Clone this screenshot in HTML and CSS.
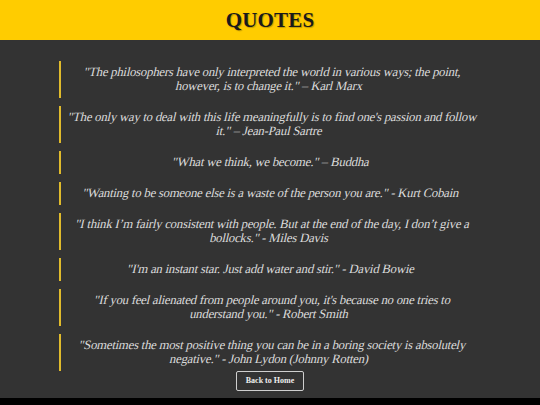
FILE: index.html
```html
<!DOCTYPE html>
<html>
<head>
<meta charset="utf-8">
<link rel="stylesheet" href="styles.css">
</head>
<body>
<header class="top">
  <h1 class="title">QUOTES</h1>
</header>
<main class="content">
  <blockquote class="quote"><div class="text">"The philosophers have only interpreted the world in various ways; the point, however, is to change it." – Karl Marx</div></blockquote>
  <blockquote class="quote"><div class="text">"The only way to deal with this life meaningfully is to find one's passion and follow it." – Jean-Paul Sartre</div></blockquote>
  <blockquote class="quote"><div class="text">"What we think, we become." – Buddha</div></blockquote>
  <blockquote class="quote"><div class="text">"Wanting to be someone else is a waste of the person you are." - Kurt Cobain</div></blockquote>
  <blockquote class="quote"><div class="text">"I think I’m fairly consistent with people. But at the end of the day, I don’t give a bollocks." - Miles Davis</div></blockquote>
  <blockquote class="quote"><div class="text">"I'm an instant star. Just add water and stir." - David Bowie</div></blockquote>
  <blockquote class="quote"><div class="text">"If you feel alienated from people around you, it's because no one tries to understand you." - Robert Smith</div></blockquote>
  <blockquote class="quote"><div class="text">"Sometimes the most positive thing you can be in a boring society is absolutely negative." - John Lydon (Johnny Rotten)</div></blockquote>
  <div class="actions"><a class="btn" href="#">Back to Home</a></div>
</main>
<footer class="bottom"></footer>
</body>
</html>
```
FILE: styles.css
```css
html, body {
  margin: 0;
  padding: 0;
  background: #000;
  font-family: "Liberation Serif", "Times New Roman", serif;
}
.top {
  background: #ffcc00;
  height: 40px;
  display: flex;
  align-items: center;
  justify-content: center;
}
.title {
  margin: 0;
  font-size: 21px;
  font-weight: bold;
  color: #1a1a1a;
  text-shadow: 1px 1px 1px rgba(0,0,0,0.25);
  letter-spacing: 0.2px;
}
.content {
  background: #333333;
  height: 358px;
  padding-top: 21px;
  box-sizing: border-box;
}
.quote {
  margin: 0 59px 8px 59px;
  border-left: 2px solid #e0bb2c;
  padding: 4px 5px 5px 5px;
  font-size: 12.8px;
  letter-spacing: -0.25px;
  line-height: 14px;
  color: #dadada;
  text-align: center;
}
.quote:last-of-type {
  margin-bottom: 0;
}
.text {
  transform: skewX(-13deg);
}
.actions {
  display: flex;
  justify-content: center;
}
.btn {
  display: inline-block;
  border: 1px solid #cfcfcf;
  border-radius: 2px;
  padding: 5px 8.5px;
  font-size: 8px;
  font-weight: bold;
  line-height: 8px;
  color: #eeeeee;
  text-decoration: none;
}
.bottom {
  height: 7px;
  background: #000;
}
```
